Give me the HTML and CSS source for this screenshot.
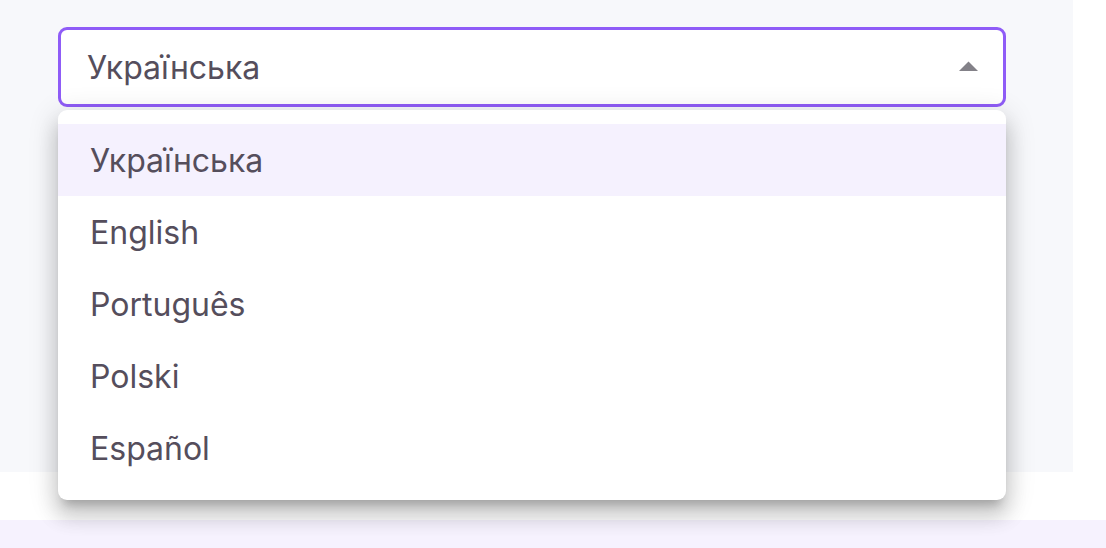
FILE: index.html
```html
<!DOCTYPE html>
<html lang="uk">
<head>
<meta charset="utf-8">
<link rel="stylesheet" href="styles.css">
</head>
<body>
<div class="page">
  <section class="panel">
    <div class="field">
      <div class="select">
        <span class="value">Українська</span>
        <svg class="arrow" width="19" height="10" viewBox="0 0 19 10"><path d="M0 10 L9.5 0.5 L19 10 Z" fill="#838188"/></svg>
      </div>
      <ul class="menu">
        <li class="item selected">Українська</li>
        <li class="item">English</li>
        <li class="item">Português</li>
        <li class="item">Polski</li>
        <li class="item">Español</li>
      </ul>
    </div>
  </section>
  <div class="gap"></div>
  <div class="band"></div>
</div>
</body>
</html>
```

FILE: styles.css
```css
html, body {
  margin: 0;
  padding: 0;
  background: #ffffff;
}
body {
  font-family: Inter, "Noto Sans", sans-serif;
  color: #554e5c;
}
.page {
  width: 1106px;
  height: 548px;
  overflow: hidden;
  display: flex;
  flex-direction: column;
}
.panel {
  width: 1073px;
  height: 472px;
  background: #f7f8fb;
  padding: 27px 0 0 58px;
  box-sizing: border-box;
}
.field {
  position: relative;
  width: 948px;
}
.select {
  height: 80px;
  box-sizing: border-box;
  border: 3px solid #8f5cf7;
  border-radius: 9px;
  background: #ffffff;
  display: flex;
  align-items: center;
  padding: 0 25px 0 26px;
  justify-content: space-between;
}
.value {
  font-size: 32px;
  letter-spacing: 0;
}
.arrow {
  display: block;
  margin-top: -2px;
}
.menu {
  position: absolute;
  left: 0;
  top: 83px;
  width: 948px;
  margin: 0;
  padding: 14px 0 16px;
  list-style: none;
  background: #ffffff;
  border-radius: 9px;
  box-shadow: 0 10px 10px -6px rgba(0,0,0,0.2), 0 16px 20px 2px rgba(0,0,0,0.14), 0 6px 28px 4px rgba(0,0,0,0.12);
}
.item {
  height: 72px;
  display: flex;
  align-items: center;
  padding-left: 32px;
  font-size: 32px;
  letter-spacing: 0;
}
.item.selected {
  background: #f5f1fe;
}
.gap {
  height: 48px;
}
.band {
  flex: 1;
  background: #f6f2fe;
}
```
